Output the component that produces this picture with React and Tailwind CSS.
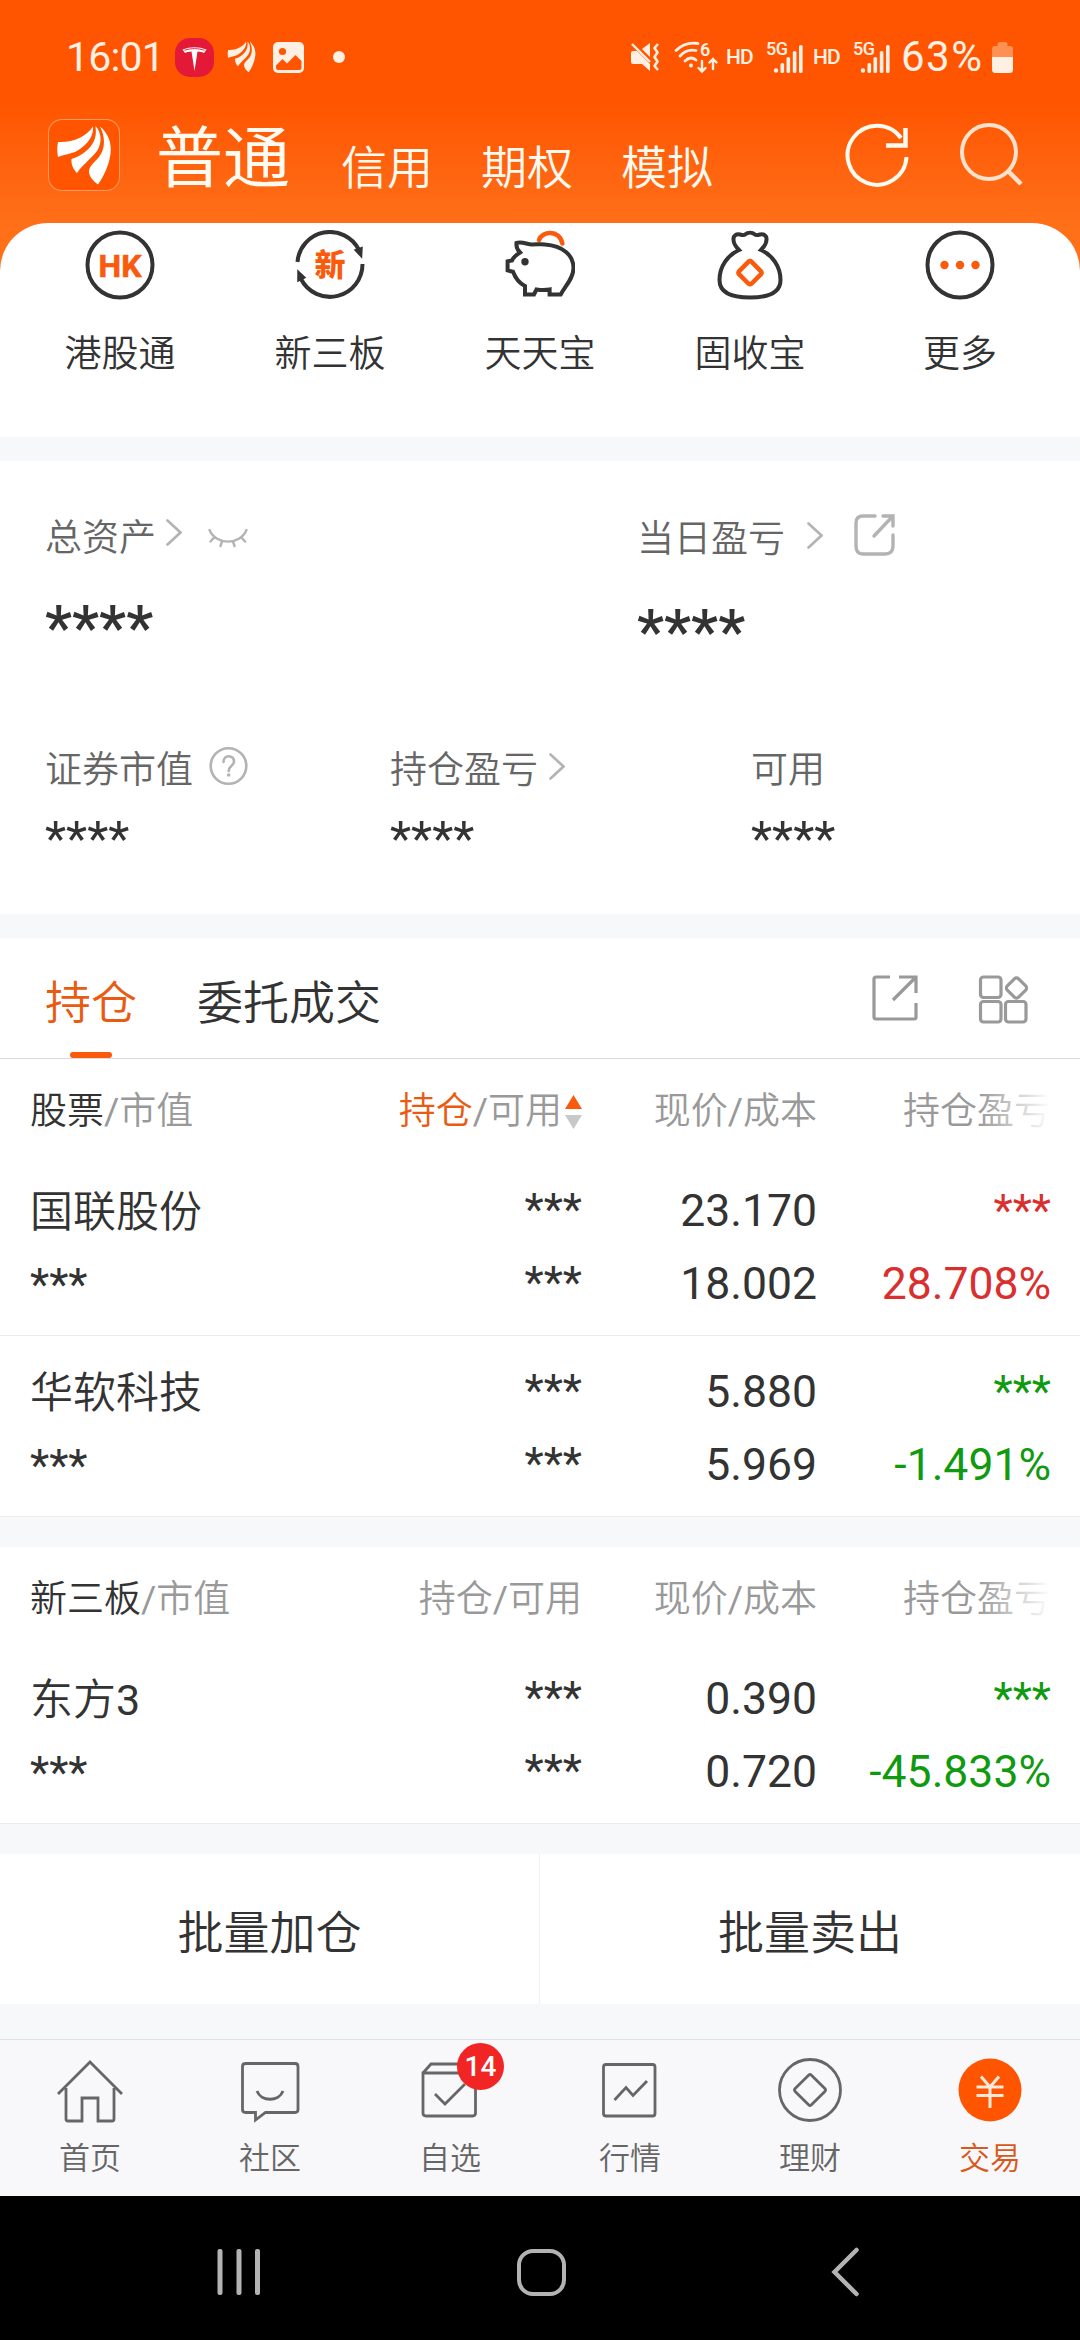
import React from "react";

const LeafShape = () => (
  <>
    <path d="M10 23 C24 24 38 18 45 7.5 C46 20 35 29 27 33 C20 35.5 14 36 10 38 C9 33 9 28 10 23Z" />
    <path d="M47.5 7 C54 14 54 24 49 32 C42 41 34 46 29 54 C25 50 23 45 23.5 40 C31 38 38 33 43 27 C49 19 48 12 47.5 7Z" />
    <path d="M52 7.5 C60 14 64 24 62.5 35 C61 46 56 57 50 65.5 C45 62 41 57 41 52.5 C41 47 47 43 51 38 C58 29 57 17 52 7.5Z" />
  </>
);

const Signal = () => (
  <div className="relative w-[37px] h-8">
    <span className="absolute left-0 -top-px text-[18px] leading-[18px] font-medium tracking-[-0.5px]">
      5G
    </span>
    <svg className="absolute inset-0" width="37" height="32" fill="currentColor">
      <circle cx="10" cy="29.5" r="2.2" />
      <rect x="14.5" y="22" width="3.6" height="10" rx="1.6" />
      <rect x="20.5" y="16" width="3.6" height="16" rx="1.6" />
      <rect x="26.8" y="10" width="3.6" height="22" rx="1.6" />
      <rect x="33" y="4" width="3.6" height="28" rx="1.6" />
    </svg>
  </div>
);

const StatusBar = () => (
  <div className="flex items-center h-[114px] pl-[66px] pr-[67px] text-[#fff0e4] font-normal">
    <span className="w-[109px] text-[41px] leading-[40px] tracking-[-0.8px]">16:01</span>
    <svg width="39" height="39" viewBox="0 0 39 39">
      <rect width="39" height="39" rx="15" fill="#e31937" />
      <path
        d="M7.500 11.500 Q19.500 7 31.500 11.500 L29 15 Q27 13.500 22.500 13.500 L19.500 33 L16.500 13.500 Q12 13.500 10 15Z"
        fill="#fff"
      />
      <path d="M9.500 12.200 Q19.500 9 29.500 12.200" stroke="#e31937" strokeWidth="0.9" fill="none" />
    </svg>
    <svg className="ml-[13px]" width="29" height="32" viewBox="8 6 56 61" preserveAspectRatio="none" fill="currentColor">
      <LeafShape />
    </svg>
    <svg className="ml-[17px]" width="31" height="31" viewBox="0 0 31 31">
      <rect width="31" height="31" rx="5" fill="currentColor" />
      <circle cx="9.5" cy="9.5" r="3.6" fill="#ff5500" />
      <path d="M3 23.5 L9.5 17 L14 21.5 L22.5 13 L28.5 19 V26 Q28.5 28 26.5 28 H5 Q3 28 3 26Z" fill="#ff5500" />
    </svg>
    <span className="ml-[29px] size-3 rounded-full bg-[#fff0e4]" />

    <div className="ml-auto flex items-center">
      <svg width="30" height="30" viewBox="0 0 30 30" fill="currentColor">
        <path d="M1 11 Q1 9 3 9 H7 L20 22 V29 L12 22 H3 Q1 22 1 20Z" />
        <path d="M12 7 L20 1 V15Z" />
        <path d="M2 2 L20 20" stroke="currentColor" strokeWidth="2.4" />
        <path
          d="M28 2 L24.5 6 L27.5 10.5 L24.5 15 L27.5 19.5 L24.5 24 L28 28"
          stroke="currentColor"
          strokeWidth="2.6"
          strokeLinejoin="round"
          fill="none"
        />
      </svg>
      <div className="relative ml-[14px] w-[44px] h-[33px]">
        <svg width="44" height="33" viewBox="0 0 44 33" fill="none" stroke="currentColor" strokeWidth="2.8" strokeLinecap="round">
          <path d="M2 9.5 Q11 0.5 24 2.5" />
          <path d="M6 15 Q13 7.5 22 9.5" />
          <path d="M11 20 Q16.500 14.500 22 19" />
          <circle cx="17" cy="24.5" r="1" fill="currentColor" strokeWidth="2" />
          <path d="M28 20 V30 M24.500 27 L28 30.500 L31.500 27 M39 28 V18 M35.500 21.500 L39 18 L42.500 21.500" strokeWidth="2.4" />
        </svg>
        <span className="absolute left-[26px] -top-px text-[18px] leading-[20px] font-semibold">6</span>
      </div>
      <span className="ml-[8px] w-[40px] text-[21px] leading-none font-medium tracking-[-0.8px]">HD</span>
      <Signal />
      <span className="ml-[10px] w-[40px] text-[21px] leading-none font-medium tracking-[-0.8px]">HD</span>
      <Signal />
      <span className="ml-[11px] w-[91px] text-[42px] leading-[40px] tracking-[1.5px] whitespace-nowrap">63%</span>
      <svg width="21" height="31" viewBox="0 0 21 31">
        <path d="M0 15 V7 Q0 4 3 4 H5.500 V2 Q5.500 0 7.500 0 H13.500 Q15.500 0 15.500 2 V4 H18 Q21 4 21 7 V15Z" fill="#ff9054" />
        <path d="M0 15 H21 V27.500 Q21 31 17.500 31 H3.500 Q0 31 0 27.500Z" fill="currentColor" />
      </svg>
    </div>
  </div>
);

const Header = () => (
  <div className="flex h-[109px] pl-12 text-[#fffaf0]">
    <div className="mt-[5px] size-[72px] rounded-[14px] border border-white/40 bg-[#ff5500]">
      <svg className="-m-px" width="72" height="72" fill="#fff">
        <LeafShape />
      </svg>
    </div>
    <span className="ml-[36px] mt-[3px] text-[67px] leading-[84px] font-normal">普通</span>
    <div className="ml-[51px] mt-[24px] flex gap-12 text-[46px] leading-[60px]">
      <span>信用</span>
      <span>期权</span>
      <span>模拟</span>
    </div>
    <svg className="ml-[132px] mt-[9px]" width="66" height="66" fill="none" stroke="currentColor" strokeWidth="4">
      <path d="M62.500 34 A29.500 29.500 0 1 1 57 15" transform="translate(-1 0)" />
      <path d="M60.500 5 V22.500 H41" strokeWidth="4.5" />
    </svg>
    <svg className="ml-[47px] mt-[7px]" width="68" height="68" fill="none" stroke="#ffe2cd" strokeWidth="4">
      <circle cx="31" cy="31" r="27" />
      <path d="M49 49 L63 63" strokeWidth="4.500" />
    </svg>
  </div>
);

const shortcuts = [
  {
    label: "港股通",
    icon: (
      <>
        <circle cx="35" cy="35" r="32.5" />
        <text x="35" y="46.500" textAnchor="middle" fontSize="32" fontWeight="700" fill="#f95a0c" stroke="#f95a0c" strokeWidth="0.6">
          HK
        </text>
      </>
    ),
  },
  {
    label: "新三板",
    icon: (
      <>
        <path d="M2.500 32 A32.500 32.500 0 0 1 64 20" />
        <path d="M67.500 34 A32.500 32.500 0 0 1 6 49" />
        <path d="M60 20 L67 17.500 L66.500 27Z M10 47.500 L3 51 L3 41Z" fill="#333" strokeWidth="1.5" />
        <text x="35" y="46" textAnchor="middle" fontSize="31" fontWeight="900" fill="#f95a0c" stroke="none">
          新
        </text>
      </>
    ),
  },
  {
    label: "天天宝",
    icon: (
      <>
        <path d="M34 10 C37 1 54 -1 57.400 13.500" stroke="#f95a0c" strokeWidth="4.5" strokeLinecap="round" />
        <path d="M11.500 13 C17 11 22 14.500 27 14.500 C33 14.500 36 14 40 14.500 C58 16 68.500 25 68.500 38 C68.500 48 61 55 55.700 64.500 H44.600 V59.500 C39 60.500 35 60 31.500 59.500 L29 64.500 H20 V56 C14 53 10 47 8 41.700 L2.600 40.500 V31.300 L7 30.500 C8.500 27 11 25 15 22.500 C12.500 20 11 17 11.500 13Z" />
        <circle cx="20" cy="31.700" r="3.700" fill="#333" stroke="none" />
      </>
    ),
  },
  {
    label: "固收宝",
    icon: (
      <>
        <path d="M24 20 C16 12 17 3 25 4.500 C27 5 29 5.500 30 4.500 C33 2 37 2 40 4.500 C41 5.500 43 5 45 4.500 C53 3 54 12 46 20 C57 25 65.500 36 65.500 50 C65.500 62 54 67.500 35 67.500 C16 67.500 4.500 62 4.500 50 C4.500 36 13 25 24 20Z" />
        <rect x="26.200" y="33.900" width="17.600" height="17.600" rx="2" transform="rotate(45 35 42.700)" stroke="#f95a0c" strokeWidth="4.500" />
      </>
    ),
  },
  {
    label: "更多",
    icon: (
      <>
        <circle cx="35" cy="35" r="32.5" />
        <g fill="#f95a0c" stroke="none">
          <circle cx="19.500" cy="35" r="4.200" />
          <circle cx="35" cy="35" r="4.200" />
          <circle cx="50.500" cy="35" r="4.200" />
        </g>
      </>
    ),
  },
];

const Chevron = ({ className }) => (
  <svg className={className} width="16" height="27" fill="none" stroke="#b3b3b3" strokeWidth="2.6" strokeLinecap="round">
    <path d="M1.500 1.500 L14.500 13.500 L1.500 25.500" />
  </svg>
);

const Assets = () => (
  <div className="h-[453px] bg-white pl-[45px] text-[#333]">
    <div className="flex h-[289px] pt-[58px]">
      <div className="w-[592px]">
        <div className="flex h-10 text-[37px] leading-10 text-[#666]">
          <span>总资产</span>
          <Chevron className="ml-[10px]" />
          <svg className="ml-[26px] mt-[9px]" width="40" height="20" fill="none" stroke="#b3b3b3" strokeWidth="2.4" strokeLinecap="round">
            <path d="M1.500 2 C8 17.500 32 17.500 38.500 2 M6 9.500 L2.500 13.500 M14 13.500 L12.500 18 M25 13.500 L26.500 18 M33.500 9.500 L37 13.500" />
          </svg>
        </div>
        <div className="mt-[39px] text-[61px] leading-[60px] font-medium">****</div>
      </div>
      <div className="pt-px">
        <div className="flex h-10 text-[37px] leading-10 text-[#666]">
          <span>当日盈亏</span>
          <Chevron className="ml-[22px] mt-0.5" />
          <svg className="ml-[31px] -mt-[7px]" width="42" height="44" fill="none" stroke="#b3b3b3" strokeWidth="3.4" strokeLinecap="round">
            <path d="M21 3 H9 Q2 3 2 10 V33 Q2 41 9 41 H31 Q39 41 39 33 V22 M29 3 H39 V13 M38 4 L20 23" />
          </svg>
        </div>
        <div className="mt-[42px] text-[61px] leading-[60px] font-medium">****</div>
      </div>
    </div>
    <div className="flex">
      <div className="w-[345px]">
        <div className="mt-px flex h-10 text-[37px] leading-10 text-[#666]">
          <span>证券市值</span>
          <svg className="ml-[16px] -mt-[5px]" width="40" height="40" fill="none" stroke="#b3b3b3" strokeWidth="2.6">
            <circle cx="19.500" cy="20" r="17.800" />
            <path d="M14.500 16 C14.500 8.500 25 8.500 25 15.500 C25 20 19.700 19.500 19.700 25" strokeLinecap="round" />
            <circle cx="19.700" cy="29" r="1.800" fill="#b3b3b3" stroke="none" />
          </svg>
        </div>
        <div className="mt-[23px] text-[49px] leading-[50px] font-normal">****</div>
      </div>
      <div className="w-[361px]">
        <div className="mt-px flex h-10 text-[37px] leading-10 text-[#666]">
          <span>持仓盈亏</span>
          <Chevron className="ml-[11px] mt-0.5" />
        </div>
        <div className="mt-[23px] text-[49px] leading-[50px] font-normal">****</div>
      </div>
      <div>
        <div className="mt-px h-10 text-[37px] leading-10 text-[#666]">可用</div>
        <div className="mt-[23px] text-[49px] leading-[50px] font-normal">****</div>
      </div>
    </div>
  </div>
);

const HoldingTabs = () => (
  <div className="relative flex h-[121px] border-b border-[#dcdcdc] bg-white pl-[45px] text-[46px] leading-[60px] text-[#333]">
    <span className="mt-[35px] text-[#ea5a10]">持仓</span>
    <span className="ml-[60px] mt-[35px]">委托成交</span>
    <span className="absolute left-[70px] bottom-0 h-1.5 w-[42px] rounded-full bg-[#f95a0c]" />
    <svg className="ml-auto mt-[36px]" width="48" height="48" fill="none" stroke="#999" strokeWidth="3.2">
      <path d="M19 3 H5 Q3 3 3 5 V43 Q3 45 5 45 H43 Q45 45 45 43 V29 M28 3 H45 V19 M44 4 L22 26" />
    </svg>
    <svg className="ml-[59px] mr-[52px] mt-[36px]" width="50" height="50" fill="none" stroke="#999" strokeWidth="3.200">
      <rect x="2.500" y="3" width="20.500" height="20.500" rx="3" />
      <rect x="2.500" y="27.500" width="20.500" height="20.500" rx="3" />
      <rect x="27.500" y="27.500" width="20.500" height="20.500" rx="3" />
      <rect x="30.500" y="6" width="16" height="16" rx="3" transform="rotate(45 38.500 14)" />
    </svg>
  </div>
);

const Slash = () => <span className="font-normal">/</span>;

const TableHead = ({ title, sorted }) => (
  <div className="grid grid-cols-[282px_270px_235px_234px] items-center h-[104px] pt-px pl-[30px] text-[37px] leading-10 text-[#999]">
    <span className="whitespace-nowrap">
      <span className="text-[#333]">{title}</span>
      <Slash />
      市值
    </span>
    <span className="flex items-center justify-end">
      <span className={sorted ? "text-[#ea5a10]" : ""}>持仓</span>
      <Slash />
      可用
      {sorted && (
        <svg className="ml-[3px]" width="17" height="36" viewBox="0 0 17 36">
          <path d="M0 15 L8.500 1 L17 15Z" fill="#f95a0c" />
          <path d="M0 21 H17 L8.500 35Z" fill="#c8c8c8" />
        </svg>
      )}
    </span>
    <span className="text-right">
      现价
      <Slash />
      成本
    </span>
    <span className="relative text-right">
      持仓盈亏
      <span className="absolute right-0 top-0 h-10 w-[72px] bg-linear-to-r from-white/0 to-white" />
    </span>
  </div>
);

const HoldingRow = ({ name, suffix, price, cost, rate }) => {
  const tone = rate.startsWith("-") ? "text-right text-[#0f9a0f]" : "text-right text-[#d9302f]";
  return (
    <div className="grid grid-cols-[282px_270px_235px_234px] content-start gap-y-[13px] h-[181px] pt-[26px] pl-[30px] border-b border-[#ebebeb] text-[44.500px] leading-[60px] font-normal text-[#333]">
      <span className="mt-px -mb-px text-[43px] font-[350]">
        {name}
        {suffix && <span className="font-normal">{suffix}</span>}
      </span>
      <span className="-mt-px mb-px text-right">***</span>
      <span className="text-right">{price}</span>
      <span className={tone}>***</span>
      <span className="mt-px -mb-px">***</span>
      <span className="-mt-px mb-px text-right">***</span>
      <span className="text-right">{cost}</span>
      <span className={tone}>{rate}</span>
    </div>
  );
};

const navItems = [
  {
    label: "首页",
    icon: <path d="M3 38 L35 6 L67 38 M11 32 V63 Q11 65 13 65 H27 V42 H43 V65 H57 Q59 65 59 63 V32" />,
  },
  {
    label: "社区",
    icon: (
      <path d="M10 7.500 H60 Q63 7.500 63 10.500 V53.500 Q63 56.500 60 56.500 H30.500 L20.500 64 V56.500 H10.500 Q7.500 56.500 7.500 53.500 V10.500 Q7.500 7.500 10.500 7.500Z M22 35 C26 46 44 46 48 35" />
    ),
  },
  {
    label: "自选",
    badge: 14,
    icon: <path d="M8 17 L16 8 H52 L60 17 M8 17 H60.500 V57 Q60.500 60 57.500 60 H11 Q8 60 8 57Z M20 38 L30 48 L50 28" />,
  },
  {
    label: "行情",
    icon: (
      <>
        <rect x="8.500" y="8.500" width="51.500" height="51.500" rx="2.500" />
        <path d="M19.500 44 L31 31.500 L38 39.500 L52 25" />
      </>
    ),
  },
  {
    label: "理财",
    icon: (
      <>
        <circle cx="35" cy="34" r="30.500" />
        <rect x="23.500" y="22.500" width="23" height="23" rx="2" transform="rotate(45 35 34)" />
      </>
    ),
  },
  {
    label: "交易",
    active: true,
    icon: (
      <>
        <circle cx="35" cy="34" r="31.500" fill="#ff5500" stroke="none" />
        <path d="M26 20.500 L35 31 L44 20.500 M21.500 31 H48.500 M21.500 39.500 H48.500 M35 31 V52" stroke="#ffeadb" strokeWidth="3" />
      </>
    ),
  },
];

const BottomNav = () => (
  <div className="grid grid-cols-6 h-[157px] border-t border-[#e1e2e6] bg-[#f8f8fb]">
    {navItems.map((item) => (
      <div key={item.label} className="relative flex flex-col items-center pt-4">
        <svg width="70" height="70" fill="none" stroke="#666" strokeWidth="2.800">
          {item.icon}
        </svg>
        {item.badge && (
          <span className="absolute left-[97px] top-[3px] size-[47px] rounded-full bg-[#f22525] text-center text-[28px] leading-[48px] font-medium text-white">
            {item.badge}
          </span>
        )}
        <span
          className={`mt-[13px] text-[31px] leading-10 ${
            item.active ? "text-[#d9591c]" : "text-[#666]"
          }`}
        >
          {item.label}
        </span>
      </div>
    ))}
  </div>
);

const SystemNav = () => (
  <div className="flex items-center h-36 bg-black pl-[217px] pt-2">
    <svg width="44" height="48" fill="#b3b3b3">
      <rect x="0.500" y="1" width="5" height="46" rx="2" />
      <rect x="19.500" y="1" width="5" height="46" rx="2" />
      <rect x="38" y="1" width="5" height="46" rx="2" />
    </svg>
    <span className="ml-[256px] h-[47px] w-[49px] rounded-[16px] border-[4.500px] border-[#b3b3b3]" />
    <svg className="ml-[265px]" width="30" height="50" fill="none" stroke="#b3b3b3" strokeWidth="4.500" strokeLinecap="round">
      <path d="M25.500 3 L3.500 25 L25.500 47" />
    </svg>
  </div>
);

const App = () => {
  return (
    <div className="w-[1080px] h-[2340px] overflow-hidden bg-[#f7f8fa] font-[350] [font-family:Roboto,'Noto_Sans_CJK_SC',sans-serif]">
      <div className="h-[271px] bg-linear-to-b from-[#ff5500] from-38% to-[#ff7019] to-85%">
        <StatusBar />
        <Header />
        <div className="grid grid-cols-5 h-[214px] rounded-t-[48px] bg-white px-[15px] pt-[7px]">
          {shortcuts.map((item) => (
            <div key={item.label} className="flex flex-col items-center">
              <svg width="70" height="70" fill="none" stroke="#333" strokeWidth="4">
                {item.icon}
              </svg>
              <span className="mt-[35px] text-[37px] leading-10 text-[#333]">{item.label}</span>
            </div>
          ))}
        </div>
      </div>
      <div className="mt-[190px]">
        <Assets />
      </div>

      <div className="mt-6">
        <HoldingTabs />
        <div className="bg-white">
          <TableHead title="股票" sorted />
          <div className="-mt-[8px]">
            <HoldingRow name="国联股份" price="23.170" cost="18.002" rate="28.708%" />
            <HoldingRow name="华软科技" price="5.880" cost="5.969" rate="-1.491%" />
          </div>
        </div>
      </div>

      <div className="mt-[30px] bg-white">
        <TableHead title="新三板" />
        <div className="-mt-[8px]">
          <HoldingRow name="东方" suffix="3" price="0.390" cost="0.720" rate="-45.833%" />
        </div>
      </div>

      <div className="mt-[30px] grid grid-cols-2 h-[150px] bg-white text-center text-[46px] text-[#333]">
        <span className="h-[150px] pt-[8px] leading-[142px] border-r border-[#f0f0f0]">批量加仓</span>
        <span className="h-[150px] pt-[8px] leading-[142px]">批量卖出</span>
      </div>

      <div className="mt-[35px]">
        <BottomNav />
      </div>
      <SystemNav />
    </div>
  );
};

export default App;
